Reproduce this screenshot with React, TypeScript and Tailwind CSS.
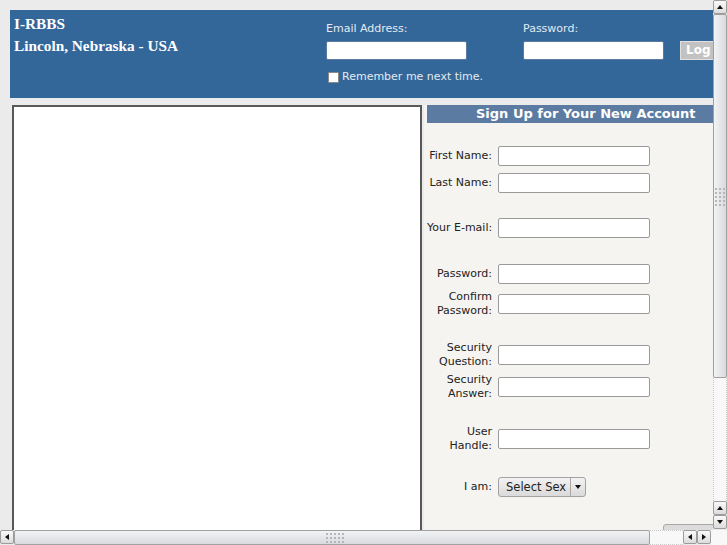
import React from 'react';

const sans = { fontFamily: '"DejaVu Sans", Verdana, sans-serif' };
const serif = { fontFamily: '"Liberation Serif", "Times New Roman", serif' };

function Arrow({ dir }: { dir: 'up' | 'down' | 'left' | 'right' }) {
  const pts = {
    up: '1,6 4,2 7,6',
    down: '1,2 4,6 7,2',
    left: '6,1 2,4 6,7',
    right: '2,1 6,4 2,7',
  }[dir];
  return (
    <svg width="8" height="8" viewBox="0 0 8 8">
      <polygon points={pts} fill="#111" />
    </svg>
  );
}

function ScrollButton({ dir }: { dir: 'up' | 'down' | 'left' | 'right' }) {
  return (
    <div className="w-[14px] h-[14px] flex items-center justify-center rounded-[2px] border border-[#9c9c9c] bg-gradient-to-b from-[#fafafa] to-[#dcdcdc] shrink-0">
      <Arrow dir={dir} />
    </div>
  );
}

function Grip({ vertical }: { vertical?: boolean }) {
  const dots = Array.from({ length: 15 });
  return (
    <div className={vertical ? 'grid grid-cols-3 gap-[2px] self-start' : 'grid grid-rows-3 grid-flow-col gap-[2px] self-center'}>
      {dots.map((_, i) => (
        <div key={i} className="w-[2px] h-[2px] bg-[#b4b6ba]" />
      ))}
    </div>
  );
}

function Row({ label, mt, children }: { label: React.ReactNode; mt: string; children: React.ReactNode }) {
  return (
    <div className={`flex items-center h-[20px] ${mt}`}>
      <div className="w-[65px] shrink-0 whitespace-nowrap text-right text-[11px] leading-[14px] text-[#222]">{label}</div>
      <div className="ml-[6px] shrink-0">{children}</div>
    </div>
  );
}

function TextBox() {
  return <div className="w-[152px] h-[20px] bg-white border border-[#9a9a9a] rounded-[2px]" />;
}

export default function App() {
  return (
    <div className="w-[727px] h-[545px] overflow-hidden bg-[#ebebeb] flex flex-col" style={sans}>
      <div className="flex h-[530px] shrink-0">
        <div className="w-[713px] h-[530px] shrink-0 overflow-hidden pt-[10px] pl-[10px]">
          <div className="w-[703px] h-[88px] bg-[#336699] flex">
            <div className="w-[316px] shrink-0 pl-[4px] pt-[3px] text-white font-bold text-[15.3px] leading-[22px]" style={serif}>
              <div>I-RBBS</div>
              <div>Lincoln, Nebraska - USA</div>
            </div>
            <div className="w-[197px] shrink-0 pt-[12px]">
              <div className="text-[11px] leading-[14px] text-[#e4eaf1]">Email Address:</div>
              <div className="mt-[5px] w-[141px] h-[19px] bg-white border border-[#5a7aa0] rounded-[2px]" />
              <div className="mt-[10px] flex items-center ml-[2px]">
                <div className="w-[11px] h-[11px] bg-white border border-[#8a8a8a] rounded-[1px]" />
                <span className="ml-[3px] text-[11px] leading-[14px] text-[#e4eaf1] whitespace-nowrap">Remember me next time.</span>
              </div>
            </div>
            <div className="w-[157px] shrink-0 pt-[12px]">
              <div className="text-[11px] leading-[14px] text-[#e4eaf1]">Password:</div>
              <div className="mt-[5px] w-[141px] h-[19px] bg-white border border-[#5a7aa0] rounded-[2px]" />
            </div>
            <div className="pt-[31px] shrink-0">
              <div className="w-[33px] h-[19px] bg-[#c2c2c2] border-y border-l border-[#e0e0e0] text-white font-bold text-[12px] leading-[17px] pl-[5px]">
                Log
              </div>
            </div>
          </div>

          <div className="flex mt-[7px]">
            <div className="ml-[2px] w-[410px] h-[440px] shrink-0 bg-white border-t-2 border-l-2 border-r-2 border-[#585858]" />
            <div className="ml-[2px] w-[320px] h-[440px] shrink-0 bg-[#f5f4f0] pl-[3px]">
              <div className="h-[18px] bg-[#5b7ba2] text-white font-bold text-[13px] leading-[18px] pl-[49px] whitespace-nowrap">
                Sign Up for Your New Account
              </div>
              <Row label="First Name:" mt="mt-[23px]"><TextBox /></Row>
              <Row label="Last Name:" mt="mt-[7px]"><TextBox /></Row>
              <Row label="Your E-mail:" mt="mt-[25px]"><TextBox /></Row>
              <Row label="Password:" mt="mt-[26px]"><TextBox /></Row>
              <Row label={<>Confirm<br />Password:</>} mt="mt-[10px]"><TextBox /></Row>
              <Row label={<>Security<br />Question:</>} mt="mt-[31px]"><TextBox /></Row>
              <Row label={<>Security<br />Answer:</>} mt="mt-[12px]"><TextBox /></Row>
              <Row label={<>User<br />Handle:</>} mt="mt-[32px]"><TextBox /></Row>
              <Row label="I am:" mt="mt-[28px]">
                <div className="w-[88px] h-[20px] flex rounded-[3px] border border-[#a2a2a2] bg-gradient-to-b from-[#f3f3f3] to-[#dadada]">
                  <div className="w-[72px] text-[11.5px] leading-[18px] text-[#222] pl-[7px] border-r border-[#a8a8a8] whitespace-nowrap">Select Sex</div>
                  <div className="flex-1 flex items-center justify-center">
                    <Arrow dir="down" />
                  </div>
                </div>
              </Row>
              <div className="mt-[27px] ml-[236px] w-[60px] h-[24px] rounded-[3px] border border-[#a8a8a8] bg-[#dcdcdc]" />
            </div>
          </div>
        </div>

        <div className="w-[14px] flex flex-col">
          <ScrollButton dir="up" />
          <div className="h-[364px] border border-[#a0a0a0] rounded-[2px] bg-gradient-to-r from-[#f2f3f5] to-[#d8dadd] flex justify-center items-start pt-[173px]">
            <Grip vertical />
          </div>
          <div className="h-[123px] bg-[#f8f8f8] border-x border-dotted border-[#c8c8c8]" />
          <ScrollButton dir="up" />
          <ScrollButton dir="down" />
        </div>
      </div>

      <div className="flex h-[15px]">
        <ScrollButton dir="left" />
        <div className="w-[636px] h-[15px] shrink-0 border border-[#a0a0a0] rounded-[2px] bg-gradient-to-b from-[#f2f3f5] to-[#d8dadd] flex items-center pl-[311px]">
          <Grip />
        </div>
        <div className="w-[33px] h-[15px] shrink-0 bg-[#f8f8f8] border-y border-dotted border-[#c8c8c8]" />
        <ScrollButton dir="left" />
        <ScrollButton dir="right" />
        <div className="flex-1 bg-[#f8f8f8]" />
      </div>
    </div>
  );
}
